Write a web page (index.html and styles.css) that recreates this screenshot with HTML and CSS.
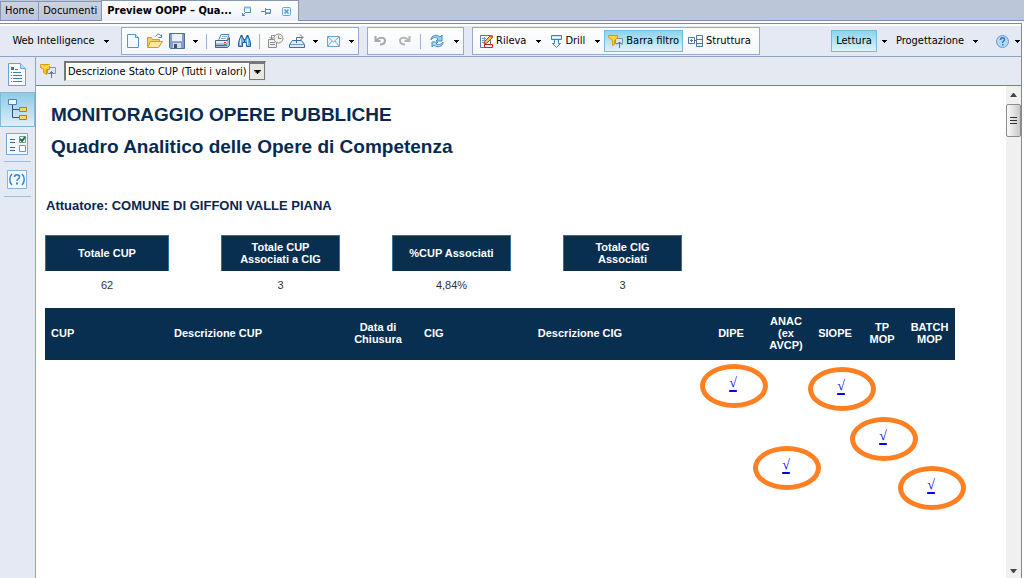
FILE: index.html
```html
<!DOCTYPE html>
<html lang="it">
<head>
<meta charset="utf-8">
<title>Preview OOPP – Quadro Analitico</title>
<link rel="stylesheet" href="styles.css">
</head>
<body>
<svg class="defs" aria-hidden="true">
  <symbol id="caret" viewBox="0 0 5 3"><path d="M0 0h5v1H4v1H3v1H2V2H1V1H0z" fill="#000"/></symbol>
</svg>
<nav class="tabs">
  <a class="tab" href="#">Home</a>
  <a class="tab" href="#">Documenti</a>
  <div class="tab tab-active">
    <a href="#">Preview OOPP – Qua...</a>
    <button aria-label="Apri in nuova finestra"><svg width="11" height="11" viewBox="0 0 11 11" fill="none" stroke="#4e8fc4"><path d="M3.500 6V1.500h6v5H5" /><path d="M3 1.500h7" stroke-width="2" stroke="#87b6dc"/><path d="M1 9.500h3M1.500 10V7M2 9l3-3"/></svg></button>
    <button aria-label="Blocca scheda"><svg width="11" height="11" viewBox="0 0 11 11" fill="none" stroke="#4e8fc4"><path d="M0 5.500h4M4.500 2v7M4.500 3.500h5v4h-5"/><path d="M5 6.500h4" stroke="#87b6dc"/></svg></button>
    <button aria-label="Chiudi scheda"><svg width="11" height="11" viewBox="0 0 11 11"><rect x="1.500" y="1.500" width="8" height="8" rx="1" fill="#eaf4fc" stroke="#6da5d2"/><path d="m3.500 3.500 4 4m0-4-4 4" stroke="#5b98cb" stroke-width="1.500"/></svg></button>
  </div>
</nav>

<div class="app">
  <header class="toolbar">
    <button class="menu">Web Intelligence <svg class="caret"><use href="#caret"/></svg></button>
    <div class="group">
      <button class="tool" aria-label="Nuovo"><svg width="16" height="16" viewBox="0 0 16 16"><path d="M2.500 1.500h8l3 3v10h-11z" fill="#f3faff" stroke="#5794d2"/><path d="M10.500 1.500v3h3" fill="#c4def5" stroke="#5794d2"/></svg></button>
      <button class="tool" aria-label="Apri"><svg width="18" height="16" viewBox="0 0 18 16"><path d="M1.500 13.500v-9h4l1 2h7v7z" fill="#f6cf62" stroke="#d59a20"/><path d="m1.500 14.500 3-6h12l-4 6z" fill="#ffe99a" stroke="#d59a20"/><path d="M9.500 3.500c2-3 4-3 6 0m0-2v3h-3" fill="none" stroke="#527ba5"/></svg></button>
      <button class="tool" aria-label="Salva"><svg width="16" height="16" viewBox="0 0 16 16"><path d="M.5.500h15v15h-14l-1-1z" fill="#7f9fca" stroke="#536c94"/><path d="M3 1h10v7H3z" fill="#e9f0f8"/><path d="M4 10h8v5H4z" fill="#d5dbe3"/><path d="M5 11h3v4H5z" fill="#3d4e70"/><path d="M3 8.500h10" stroke="#90acd0"/></svg></button>
      <button class="drop" aria-label="Opzioni di salvataggio"><svg class="caret"><use href="#caret"/></svg></button>
      <span class="sep"></span>
      <button class="tool" aria-label="Stampa"><svg width="17" height="16" viewBox="0 0 17 16"><path d="M4.500 7.500 7 1.500h8l-2 6" fill="#fff" stroke="#547eb2"/><path d="M8 3.500h5M7 5.500h5" stroke="#86add5"/><path d="M1.500 7.500h12l2-3v8l-2 2h-12z" fill="#a7c0dc" stroke="#4b617f"/><path d="M2 8h11v2H2z" fill="#e7eff7"/><path d="M2 12.500h11" stroke="#4b617f"/><path d="M10 9h2v1h-2z" fill="#e33"/><path d="M10 11h2v2h-2z" fill="#18b526"/></svg></button>
      <button class="tool" aria-label="Trova"><svg width="15" height="14" viewBox="0 0 15 14"><path d="M3.500 2.500h2l1 3h2l1-3h2l2 6v4h-4v-4h-4v4h-4v-4z" fill="#70b3e9" stroke="#235f9e"/><path d="M4.500 1v2M10.500 1v2" stroke="#235f9e" stroke-width="2"/><path d="M3.500 5v6M10.500 5v6" stroke="#e2f3ff"/><path d="M7.500 5v3" stroke="#235f9e"/></svg></button>
      <span class="sep"></span>
      <button class="tool" aria-label="Cronologia"><svg width="17" height="16" viewBox="0 0 17 16" fill="none" stroke="#8c8c8c"><path d="M1.500 6.500h8v8h-8z" fill="#f1f1f1"/><path d="M3 9.500h5M3 11.500h5M4.500 6V2.500H8M2.500 4l2 2 2-2"/><circle cx="11.500" cy="5.500" r="4.500" fill="#f5f1e8"/><path d="M11.500 2.500v3h3"/></svg></button>
      <button class="tool" aria-label="Esporta"><svg width="17" height="16" viewBox="0 0 17 16" fill="none" stroke="#3d6f9f"><path d="m3.500 7.500-3 4v3h15v-3l-3-4z" fill="#dcecf8"/><path d="M1 11.500h14" stroke="#6f9bc3"/><path d="M7.500 10V4.500h6M11 1.500l3 3-3 3"/></svg></button>
      <button class="drop" aria-label="Opzioni di esportazione"><svg class="caret"><use href="#caret"/></svg></button>
      <button class="tool" aria-label="Invia"><svg width="13" height="11" viewBox="0 0 13 11"><path d="M.5.500h12v10H.5z" fill="#edf7ff" stroke="#6ca1d5"/><path d="m1 1 5.500 5L12 1M1 10l4-5m7 5L8 5" fill="none" stroke="#79a9d6"/></svg></button>
      <button class="drop" aria-label="Opzioni di invio"><svg class="caret"><use href="#caret"/></svg></button>
    </div>
    <div class="group group-wide">
      <button class="tool" aria-label="Annulla"><svg width="13" height="12" viewBox="0 0 13 12" fill="none" stroke="#a4a9ae" stroke-width="2"><path d="M1.500 1v5h5M2 5.500c4-4 9-3 9 0 0 3-2 4-5 4"/></svg></button>
      <button class="tool" aria-label="Ripeti"><svg width="13" height="12" viewBox="0 0 13 12" fill="none" stroke="#b2b6ba" stroke-width="2"><path d="M11.500 1v5h-5M11 5.500c-4-4-9-3-9 0 0 3 2 4 5 4"/></svg></button>
      <span class="sep"></span>
      <button class="tool" aria-label="Aggiorna"><svg width="14" height="14" viewBox="0 0 14 14"><path d="M1 6c0-5 6-6 9-3l2-2v6H6l2-2C6 3 3 3 1 6z" fill="#8fd0f6" stroke="#4a90c6"/><path d="M13 8c0 5-6 6-9 3l-2 2V8h6l-2 2c2 1 5 1 7-2z" fill="#a9dcf8" stroke="#4a90c6"/></svg></button>
      <button class="drop" aria-label="Opzioni di aggiornamento"><svg class="caret"><use href="#caret"/></svg></button>
    </div>
    <div class="group group-labels">
      <button class="label-tool"><svg width="15" height="15" viewBox="0 0 15 15"><path d="M1.500 1.500h10v12h-10z" fill="#eff6ff" stroke="#557fab"/><path d="M3 4.500h4M3 6.500h4M3 8.500h3M5.500 3v7" stroke="#789dc8"/><path d="m5 10 1-3 6-6 2 2-6 6z" fill="#ffc22a" stroke="#905f2b"/><path d="m11 2 2 2 1-2-1-1z" fill="#e14b32"/><path d="M5.500 10.500h8v3h-8z" fill="#fff" stroke="#d71920"/></svg>Rileva</button>
      <button class="drop" aria-label="Opzioni rileva"><svg class="caret"><use href="#caret"/></svg></button>
      <button class="label-tool"><svg width="13" height="15" viewBox="0 0 13 15"><path d="M1.500 1.500h10v4h-10z" fill="#c6e1f7" stroke="#477cae"/><path d="M2 3.500h9" stroke="#fff"/><path d="M4.500 5.500h4v4h2l-4 4-4-4h2z" fill="#f5fbff" stroke="#477cae"/></svg>Drill</button>
      <button class="drop" aria-label="Opzioni drill"><svg class="caret"><use href="#caret"/></svg></button>
      <button class="label-tool pressed"><svg width="16" height="15" viewBox="0 0 16 15"><path d="M7.500 4.500h7v5h-7z" fill="#d5e5f4" stroke="#7892af"/><path d="M.5 1.500h9v2l-3 3v4l-2 1v-5l-4-3z" fill="#ffd22e" stroke="#d99b0a"/><path d="M11.500 14V8M9 10.500 11.500 8l2.500 2.500" fill="none" stroke="#5c7792"/></svg>Barra filtro</button>
      <button class="label-tool"><svg width="16" height="14" viewBox="0 0 16 14" fill="none" stroke="#53769a"><path d="M8.500 1.500h6v11h-6zM8 5.500h7M8 9.500h7" fill="#eef4fa"/><path d="M.5 3.500h6v6h-6zM2 6.500h3M3.500 5v3M7 6.500h1"/></svg>Struttura</button>
    </div>
    <div class="modes">
      <button class="mode pressed">Lettura</button>
      <button class="drop" aria-label="Opzioni lettura"><svg class="caret"><use href="#caret"/></svg></button>
      <button class="menu design">Progettazione <svg class="caret"><use href="#caret"/></svg></button>
      <button class="tool" aria-label="Guida"><svg width="13" height="13" viewBox="0 0 13 13"><circle cx="6.500" cy="6.500" r="6" fill="#b4d9f7" stroke="#609bd9"/><path d="M4.500 5c0-3 4-3 4-.5C8.500 6 6.500 6 6.500 8" fill="none" stroke="#2f78c8" stroke-width="1.500"/><path d="M6 9h1.500v1.500H6z" fill="#2f78c8"/></svg></button>
      <button class="drop" aria-label="Opzioni guida"><svg class="caret"><use href="#caret"/></svg></button>
    </div>
  </header>

  <div class="workspace">
    <aside class="rail">
      <button aria-label="Riepilogo documento"><svg width="18" height="23" viewBox="0 0 18 23"><path d="M.5.500h12l5 5v17H.5z" fill="#f8fcff" stroke="#6ba2d3"/><path d="M12.500.500v5h5" fill="#c3def4" stroke="#6ba2d3"/><path d="M3 4h3v3H3z" fill="#3478c4"/><path d="M7 6.500h3M5 9.500h8M5 12.500h9M5 15.500h9M5 18.500h9" stroke="#4b7dac"/><path d="M3 9.500h1M3 12.500h1M3 15.500h1M3 18.500h1" stroke="#3478c4"/></svg></button>
      <button class="rail-active" aria-label="Mappa di navigazione"><svg width="20" height="23" viewBox="0 0 20 23"><path d="M4.500 7v12.500H12M4.500 11.500H12" fill="none" stroke="#345475"/><path d="M.5 1.500h8v5h-8z" fill="#edf7ff" stroke="#4e83b2"/><path d="M11.500 9.500h7v4h-7zM11.500 17.500h7v4h-7z" fill="#ffd469" stroke="#b97820"/></svg></button>
      <button aria-label="Controlli di input"><svg width="22" height="22" viewBox="0 0 22 22"><path d="M.5.500h21v21H.5z" fill="#f0f7fe" stroke="#78a9d7"/><path d="M4 6.500h5M4 9.500h5M4 14.500h5M4 17.500h5" stroke="#49647e"/><path d="M13.500 3.500h6v6h-6zM13.500 12.500h6v6h-6z" fill="#fff" stroke="#8592a4"/><path d="m14 6 2 2 3-4" fill="none" stroke="#087a34" stroke-width="2"/></svg></button>
      <button aria-label="Guida utente"><svg width="20" height="19" viewBox="0 0 20 19" fill="none" stroke="#3684cf"><path d="M.5.500h19v18H.5z" fill="#f4faff" stroke="#85b5df"/><path d="M5 4c-3 3-3 8 0 11M15 4c3 3 3 8 0 11M7.500 7c0-3 5-3 5 0 0 2-2.500 2-2.500 4" stroke-width="1.500"/><path d="M9 12.500h2v2H9z" fill="#3684cf" stroke="none"/></svg></button>
    </aside>
    <main class="main">
      <div class="filterbar">
        <svg width="17" height="16" viewBox="0 0 17 16"><path d="M7.500 4.500h8v6h-8z" fill="#dce6f4" stroke="#8998b6"/><path d="M.5 1.500h9v5h-3v5l-3-2v-3l-3-2z" fill="#ffc928" stroke="#d99a10"/><path d="m1 2 4 3 5-3" fill="none" stroke="#fff0a0"/><path d="M11.500 15V8.500M9 11l2.500-2.500L14 11" fill="none" stroke="#69728b"/></svg>
        <label class="picker">
          <select aria-label="Filtro stato CUP"><option>Descrizione Stato CUP (Tutti i valori)</option></select>
          <span class="picker-arrow"><svg class="caret-big"><use href="#caret"/></svg></span>
        </label>
      </div>
      <div class="viewer">
        <article class="report">
          <h1>MONITORAGGIO OPERE PUBBLICHE</h1>
          <h2>Quadro Analitico delle Opere di Competenza</h2>
          <h3>Attuatore: COMUNE DI GIFFONI VALLE PIANA</h3>
          <dl class="totals">
            <div class="first"><dt>Totale CUP</dt><dd>62</dd></div>
            <div><dt>Totale CUP<br>Associati a CIG</dt><dd>3</dd></div>
            <div><dt>%CUP Associati</dt><dd>4,84%</dd></div>
            <div><dt>Totale CIG<br>Associati</dt><dd>3</dd></div>
          </dl>
          <div class="detail">
            <table>
              <colgroup><col class="c-cup"><col class="c-desc"><col class="c-date"><col class="c-cig"><col class="c-desc"><col class="c-dipe"><col class="c-anac"><col class="c-siope"><col class="c-tp"><col class="c-batch"></colgroup>
              <thead><tr><th class="left">CUP</th><th>Descrizione CUP</th><th>Data di<br>Chiusura</th><th class="left">CIG</th><th>Descrizione CIG</th><th>DIPE</th><th>ANAC<br>(ex<br>AVCP)</th><th>SIOPE</th><th>TP<br>MOP</th><th>BATCH<br>MOP</th></tr></thead>
            </table>
            <div class="marks">
              <a class="mark m-dipe" href="#">√</a>
              <a class="mark m-siope" href="#">√</a>
              <a class="mark m-tp" href="#">√</a>
              <a class="mark m-anac" href="#">√</a>
              <a class="mark m-batch" href="#">√</a>
            </div>
          </div>
        </article>
        <div class="scrollbar">
          <svg width="7" height="4" viewBox="0 0 7 4"><path d="M3 0h1l3 4H0z" fill="#444"/></svg>
          <div class="thumb"><i></i><i></i><i></i></div>
          <svg class="down" width="7" height="4" viewBox="0 0 7 4"><path d="M0 0h7L4 4H3z" fill="#444"/></svg>
        </div>
      </div>
    </main>
  </div>
</div>
</body>
</html>
```
FILE: styles.css
```css
* { box-sizing: border-box; }
body {
  margin: 0;
  min-height: 100vh;
  display: flex;
  flex-direction: column;
  background: #fff;
  color: #000;
  font: 11px/14px "DejaVu Sans Condensed", "Noto Sans", sans-serif;
}
button { font: inherit; color: inherit; background: none; border: 0; padding: 0; }
button svg { flex: none; }
a { color: inherit; text-decoration: none; }
.defs { position: absolute; width: 0; height: 0; }
.caret { width: 5px; height: 3px; }
.caret-big { width: 7px; height: 4px; }

.tabs { display: flex; height: 21px; background: #bcc6d9; border-bottom: 1px solid #7b92b4; }
.tab {
  display: flex;
  align-items: center;
  padding: 0 4px;
  margin-top: 1px;
  background: linear-gradient(#ccd3e1, #bcc5d6);
  border: 1px solid #8496b2;
  border-bottom: 0;
  white-space: nowrap;
}
.tab + .tab { margin-left: -1px; }
.tab-active {
  gap: 9px;
  margin-top: 0;
  margin-bottom: -1px;
  padding: 0 6px 0 5px;
  background: linear-gradient(#fff, #edf2f9);
  font-weight: bold;
}
.tab-active button { display: flex; }

.app { flex: 1; display: flex; flex-direction: column; margin: 2px 2px 0 0; border-top: 1px solid #888; border-right: 1px solid #888; }
.toolbar {
  display: flex;
  align-items: center;
  height: 33px;
  background: #e4e9f3;
  border-top: 2px solid #fbfcfe;
  border-bottom: 1px solid #8fa3c4;
}
.toolbar button { display: flex; align-items: center; justify-content: center; white-space: nowrap; }
.toolbar .menu { gap: 9px; width: 121px; }
.group {
  display: flex;
  align-items: center;
  height: 28px;
  margin-right: 8px;
  background: linear-gradient(#fff, #f3f6fb);
  border: 1px solid #93acd0;
}
.tool { width: 22px; height: 22px; }
.group-wide .tool { width: 24px; }
.toolbar .drop { width: 14px; height: 22px; }
.sep { width: 1px; height: 15px; margin: 0 4px; background: #9cb5d4; }
.label-tool { height: 22px; padding: 0 5px; gap: 2px; }
.group-labels { padding: 0 3px 0 1px; }
.toolbar .pressed {
  background: linear-gradient(#8bd3ef, #dff2fa);
  border: 1px solid #76bcd8;
}
.label-tool.pressed { padding: 0 3px; }
.modes { display: flex; align-items: center; margin-left: auto; }
.mode { width: 46px; height: 22px; }
.toolbar .design { width: 92px; margin-right: 8px; }
.toolbar .modes .drop:last-child { width: 8px; }

.workspace { flex: 1; display: flex; }
.rail { width: 36px; display: flex; flex-direction: column; align-items: center; background: #e4e9f3; border-right: 1px solid #8fa3c4; }
.rail button { display: flex; align-items: center; justify-content: center; width: 27px; height: 35px; padding-right: 2px; border-bottom: 1px solid #9dbdd9; }
.rail button:first-child { border: 0; }
.rail .rail-active { width: 100%; padding: 0; background: linear-gradient(#8ccbe8, #dceff8); border: 1px solid #7fbbd9; }
.main { flex: 1; min-width: 0; display: flex; flex-direction: column; }
.filterbar {
  display: flex;
  align-items: center;
  gap: 7px;
  height: 29px;
  padding-left: 4px;
  background: #e5e9f2;
  border-bottom: 1px solid #6c80a5;
}
.picker { position: relative; display: flex; }
.picker select {
  appearance: none;
  width: 202px;
  height: 20px;
  padding: 0 16px 0 2px;
  border: 1px solid #e2e2e2;
  border-top: 2px solid #777;
  border-left: 2px solid #777;
  border-radius: 0;
  background: #fff;
  color: #000;
  font: inherit;
}
.picker-arrow {
  position: absolute;
  top: 2px;
  right: 1px;
  width: 16px;
  height: 17px;
  display: flex;
  align-items: center;
  justify-content: center;
  background: #e8e8e4;
  border: 1px solid #777;
  pointer-events: none;
}
.viewer { flex: 1; display: flex; background: #fff; }
.report { flex: 1; min-width: 0; padding: 17px 0 0 9px; font-family: "Liberation Sans", Arial, sans-serif; }
h1, h2, h3, dl, dd { margin: 0; }
h1, h2 { padding-left: 6px; font-size: 19px; line-height: 24px; color: #062b52; }
h2 { margin-top: 8px; }
h3 { margin-top: 39px; padding-left: 1px; font-size: 13px; line-height: 16px; color: #0a2550; }
.totals { display: flex; gap: 52px; margin-top: 21px; text-align: center; }
.totals div { width: 119px; }
.totals .first { width: 124px; }
.totals dt {
  display: flex;
  align-items: center;
  justify-content: center;
  height: 36px;
  padding-bottom: 2px;
  background: #082e50;
  border: 1px solid #2f719f;
  border-bottom: 0;
  color: #fff;
  font-weight: bold;
  line-height: 12px;
}
.totals dd { margin-top: 7px; color: #333; line-height: 14px; }
.detail { position: relative; margin-top: 16px; }
table { width: 910px; table-layout: fixed; border-collapse: collapse; background: #082e50; }
th { height: 52px; padding: 0 0 2px; color: #fff; font-size: 11px; line-height: 12px; text-align: center; }
th.left { padding-left: 6px; text-align: left; }
.c-cup { width: 53px; }
.c-desc { width: 240px; }
.c-date { width: 80px; }
.c-cig { width: 42px; }
.c-dipe { width: 62px; }
.c-anac { width: 48px; }
.c-siope { width: 50px; }
.c-tp { width: 44px; }
.c-batch { width: 51px; }

/* Circled ticks are placed freely over the report body. */
.marks { height: 160px; }
.mark {
  position: absolute;
  width: 68px;
  height: 44px;
  padding: 6px 2px 0 0;
  border: 5px solid #ff8022;
  border-radius: 50%;
  color: #00f;
  font: 14px/16px "Liberation Serif", serif;
  text-align: center;
  text-decoration: underline;
  text-decoration-thickness: 2px;
  text-underline-offset: 3px;
}
.m-dipe { left: 655px; top: 56px; }
.m-siope { left: 763px; top: 59px; }
.m-tp { left: 805px; top: 109px; }
.m-anac { left: 708px; top: 138px; }
.m-batch { left: 853px; top: 158px; }

.scrollbar { width: 15px; display: flex; flex-direction: column; align-items: center; padding: 7px 0 5px; background: #f0f0f0; }
.thumb {
  width: 15px;
  height: 33px;
  margin-top: 7px;
  display: flex;
  flex-direction: column;
  align-items: center;
  justify-content: center;
  gap: 2px;
  background: linear-gradient(90deg, #fafafa, #c9c9c9);
  border: 1px solid #8c8c8c;
  border-radius: 2px;
}
.thumb i { width: 7px; height: 1px; background: #333; }
.down { margin-top: auto; }
```
